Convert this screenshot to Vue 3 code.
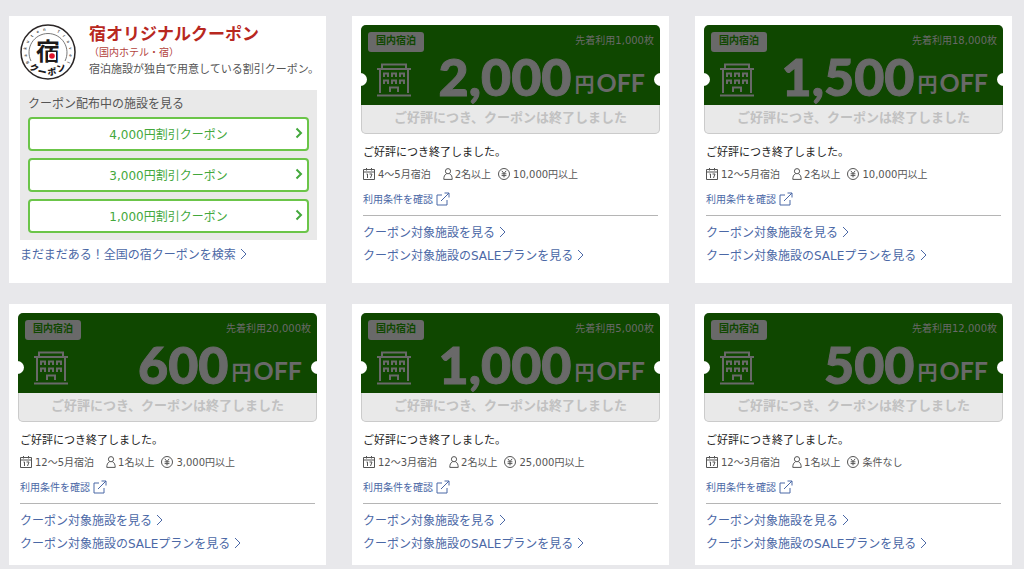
<script setup>
const discounts = ['4,000', '3,000', '1,000']

const ringLetters = [...'Rakuten Travel'].map((letter, i) => ({ letter, angle: -117 + i * 18 }))
const logoKana = [
  { letter: 'ク', x: 14, y: 47, angle: 24 },
  { letter: 'ー', x: 22, y: 51, angle: 12 },
  { letter: 'ポ', x: 32, y: 51, angle: -6 },
  { letter: 'ン', x: 41, y: 47, angle: -22 },
]

const offers = [
  { amount: '2,000', limit: '1,000', period: '4～5月宿泊', people: '2名以上', price: '10,000円以上' },
  { amount: '1,500', limit: '18,000', period: '12～5月宿泊', people: '2名以上', price: '10,000円以上' },
  { amount: '600', limit: '20,000', period: '12～5月宿泊', people: '1名以上', price: '3,000円以上' },
  { amount: '1,000', limit: '5,000', period: '12～3月宿泊', people: '2名以上', price: '25,000円以上' },
  { amount: '500', limit: '12,000', period: '12～3月宿泊', people: '1名以上', price: '条件なし' },
]
</script>

<template>
  <main class="page">
    <section class="card original">
      <header class="intro">
        <svg class="logo" viewBox="0 0 56 56" role="img" aria-label="宿クーポン">
          <circle cx="28" cy="28" r="27" fill="#fff" stroke="#2b2626" stroke-width="1.5" />
          <path d="M11 37 A19 19 0 1 1 45 37" fill="none" stroke="#555" stroke-width="0.8" />
          <text v-for="r in ringLetters" :key="r.angle" class="logo-ring" x="28" y="6.5" :transform="`rotate(${r.angle} 28 28)`">{{ r.letter }}</text>
          <text class="logo-main" x="28" y="36">宿</text>
          <rect x="28" y="28" width="8" height="8" fill="#fff" />
          <circle cx="32" cy="32" r="2.8" fill="#e0142c" />
          <text v-for="k in logoKana" :key="k.letter" class="logo-sub" :x="k.x" :y="k.y" :transform="`rotate(${k.angle} ${k.x} ${k.y - 3})`">{{ k.letter }}</text>
        </svg>
        <div class="intro-text">
          <h2>宿オリジナルクーポン</h2>
          <p class="scope">（国内ホテル・宿）</p>
          <p class="about">宿泊施設が独自で用意している割引クーポン。</p>
        </div>
      </header>
      <div class="picker">
        <h3>クーポン配布中の施設を見る</h3>
        <button v-for="d in discounts" :key="d" type="button">
          <span>{{ d }}円割引クーポン</span>
          <svg class="btn-arrow" viewBox="0 0 8 12"><path d="M1.5 1.5 L6 6 L1.5 10.5" /></svg>
        </button>
      </div>
      <a class="more" href="#search">まだまだある！全国の宿クーポンを検索<svg class="chevron" viewBox="0 0 7 12"><path d="M1 1 L6 6 L1 11" /></svg></a>
    </section>

    <section v-for="o in offers" :key="o.amount" class="card offer">
      <div class="coupon">
        <div class="face">
          <div class="face-top">
            <span class="badge">国内宿泊</span>
            <span class="limit">先着利用{{ o.limit }}枚</span>
          </div>
          <div class="face-main">
            <svg class="hotel" viewBox="0 0 34 34">
              <path d="M5 5 V1.5 H29 V5 M0 6 H34 M3 6 V30 M31 6 V30 M0 32.5 H34" />
              <path d="M7 14 V10.5 H11 V14 M15 14 V10.5 H19 V14 M23 14 V10.5 H27 V14 M7 21 V17.5 H11 V21 M15 21 V17.5 H19 V21 M23 21 V17.5 H27 V21 M13 29 V24.5 H21 V29" />
            </svg>
            <strong class="amount">{{ o.amount }}<span class="unit"><span class="yen">円</span>OFF</span></strong>
          </div>
        </div>
        <p class="ended">ご好評につき、クーポンは終了しました</p>
      </div>
      <div class="details">
        <p class="status">ご好評につき終了しました。</p>
        <ul class="terms">
          <li class="period">
            <svg class="calendar" viewBox="0 0 12 12"><path d="M0.5 1.5 H11.5 V11.5 H0.5 Z M0.5 4 H11.5 M3.5 0 V2.5 M8.5 0 V2.5" /><path d="M3.5 6 H4.5 V10 M6.5 6 H9 L7.5 10" /></svg>
            {{ o.period }}
          </li>
          <li class="people">
            <svg class="person" viewBox="0 0 10 12"><circle cx="5" cy="3.2" r="2.6" /><path d="M3.5 5.8 C1.5 6.8 0.8 8.5 0.8 11.4 H9.2 C9.2 8.5 8.5 6.8 6.5 5.8" /></svg>
            {{ o.people }}
          </li>
          <li class="price">
            <svg class="coin" viewBox="0 0 12 12"><circle cx="6" cy="6" r="5.5" /><path d="M3.8 2.8 L6 5.5 L8.2 2.8 M6 5.5 V9.4 M3.6 5.8 H8.4 M3.6 7.6 H8.4" /></svg>
            {{ o.price }}
          </li>
        </ul>
        <a class="check" href="#terms">利用条件を確認<svg class="external" viewBox="0 0 14 14"><path d="M6 3 H1 V13 H11 V8 M5 9 L13 1 M8.5 1 H13 V5.5" /></svg></a>
        <nav class="links">
          <a href="#hotels">クーポン対象施設を見る<svg class="chevron" viewBox="0 0 7 12"><path d="M1 1 L6 6 L1 11" /></svg></a>
          <a href="#sale">クーポン対象施設のSALEプランを見る<svg class="chevron" viewBox="0 0 7 12"><path d="M1 1 L6 6 L1 11" /></svg></a>
        </nav>
      </div>
    </section>
  </main>
</template>

<style>
body {
  background: #e8e8eb;
}
</style>

<style scoped>
.page {
  display: grid;
  grid-template-columns: repeat(3, 1fr);
  gap: 21px 26px;
  padding: 16px 12px 4px 9px;
  font-family: "DejaVu Sans", "Noto Sans CJK JP", sans-serif;
  font-size: 12px;
  color: #555;
}
h2, h3, p, ul {
  margin: 0;
  padding: 0;
}
a {
  color: #4b68a6;
  text-decoration: none;
}
svg {
  display: block;
  flex: none;
  fill: none;
  stroke: currentColor;
}
.card {
  background: #fff;
  min-width: 0;
}
.original {
  padding: 8px 9px 16px 11px;
}
.intro {
  display: flex;
  gap: 13px;
  height: 66px;
}
.logo {
  width: 56px;
  height: 56px;
}
.logo rect,
.logo circle[fill="#e0142c"] {
  stroke: none;
}
.logo text {
  stroke: none;
  fill: #1d1a1a;
  text-anchor: middle;
  font-family: "Noto Sans CJK JP", sans-serif;
  font-weight: 700;
}
.logo .logo-ring {
  font-size: 4px;
  fill: #555;
}
.logo .logo-main {
  font-size: 24px;
}
.logo .logo-sub {
  font-size: 9px;
  font-weight: 900;
}
.intro-text {
  white-space: nowrap;
}
h2 {
  font-size: 17px;
  line-height: 20px;
  font-weight: 700;
  color: #b8281f;
}
.scope {
  font-size: 10px;
  line-height: 18px;
  color: #b2423c;
}
.about {
  font-size: 11px;
  line-height: 16px;
}
.picker {
  display: flex;
  flex-direction: column;
  gap: 7px;
  padding: 1px 8px 7px;
  background: #e9e9e9;
}
h3 {
  font-size: 12px;
  font-weight: 400;
  line-height: 26px;
  margin-bottom: -7px;
}
button {
  display: flex;
  align-items: center;
  height: 34px;
  padding: 0 4px 2px 12px;
  border: 2px solid #6bc549;
  border-radius: 4px;
  background: #fff;
  color: #43a83c;
  font: inherit;
}
button span {
  flex: 1;
  text-align: center;
}
.btn-arrow {
  width: 8px;
  height: 12px;
  stroke-width: 2;
}
.more,
.links a {
  display: flex;
  align-items: center;
  gap: 4px;
  line-height: 23px;
  white-space: nowrap;
}
.more {
  margin-top: 4px;
}
.chevron {
  width: 7px;
  height: 12px;
  margin-bottom: 3px;
}
.offer {
  padding: 9px;
}
.coupon {
  position: relative;
  border-radius: 5px;
  box-shadow: inset 0 0 0 1px #cbcbcb;
  background: #e9e9e9;
}
.coupon::before,
.coupon::after {
  content: "";
  position: absolute;
  top: 48px;
  width: 13px;
  height: 13px;
  border-radius: 50%;
  background: #fff;
}
.coupon::before {
  left: -7px;
}
.coupon::after {
  right: -7px;
}
.face {
  height: 80px;
  border-radius: 5px 5px 0 0;
  background: #0f4700;
  color: #696969;
}
.face-top {
  display: flex;
  justify-content: space-between;
  height: 20px;
  padding: 7px 6px 0 7px;
  font-size: 10px;
}
.badge {
  padding: 0 8px 2px;
  border-radius: 3px;
  background: #696969;
  color: #0f4700;
  font-weight: 700;
  line-height: 18px;
}
.limit {
  line-height: 18px;
}
.face-main {
  display: flex;
  justify-content: space-between;
  padding: 0 15px 0 16px;
}
.hotel {
  width: 34px;
  height: 34px;
  margin-top: 11px;
  stroke-width: 2;
}
.amount {
  display: flex;
  align-items: flex-start;
  height: 53px;
  font-family: Lato, "Noto Sans CJK JP", sans-serif;
  font-size: 52px;
  line-height: 48px;
  font-weight: 900;
  -webkit-text-stroke: 1px #696969;
}
.unit {
  align-self: flex-end;
  padding-bottom: 8px;
  margin-left: 3px;
  font-size: 25px;
  font-weight: 700;
  line-height: 25px;
  -webkit-text-stroke: 0;
}
.yen {
  margin-right: 2px;
  font-size: 20px;
}
.ended {
  padding-bottom: 4px;
  font-size: 13px;
  font-weight: 700;
  line-height: 25px;
  text-align: center;
  color: #c1c1c1;
}
.details {
  padding: 9px 2px 0;
}
.status {
  font-size: 11px;
  line-height: 20px;
  color: #222;
}
.terms {
  display: flex;
  list-style: none;
  font-size: 10px;
  line-height: 24px;
  white-space: nowrap;
}
.terms li {
  display: flex;
  align-items: center;
  gap: 3px;
}
.terms .people {
  gap: 2px;
  margin: 0 7px 0 12px;
}
.terms svg {
  margin-bottom: 3px;
}
.calendar,
.coin {
  width: 12px;
  height: 12px;
}
.person {
  width: 10px;
  height: 12px;
}
.check {
  display: flex;
  align-items: center;
  gap: 3px;
  font-size: 10px;
  line-height: 26px;
}
.external {
  width: 14px;
  height: 14px;
  margin-bottom: 3px;
}
.links {
  margin-top: 2px;
  padding-top: 6px;
  border-top: 1px solid #b5b5b5;
}
</style>
